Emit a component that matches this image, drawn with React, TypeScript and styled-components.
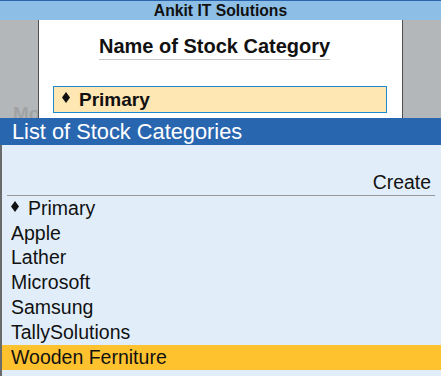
import React from "react";
import styled, { createGlobalStyle } from "styled-components";

const Global = createGlobalStyle`
  html, body { margin: 0; padding: 0; background: #e1eefa; }
  body { font-family: "Liberation Sans", Arial, sans-serif; }
  #root { width: 441px; height: 376px; overflow: hidden; }
`;

const Screen = styled.div`
  width: 441px;
  height: 376px;
  display: flex;
  flex-direction: column;
  overflow: hidden;
`;

const TopBar = styled.div`
  height: 19px;
  border-top: 1px solid #2b64ae;
  background: #8cbee6;
  display: flex;
  align-items: center;
  justify-content: center;
  font-weight: bold;
  font-size: 15.7px;
  color: #111;
`;

const GrayArea = styled.div`
  height: 98px;
  background: #b4b7ba;
  display: flex;
`;

const SideCol = styled.div`
  width: 38px;
  overflow: hidden;
  display: flex;
  align-items: flex-end;
  padding-left: 13px;
  box-sizing: border-box;
`;

const FadedText = styled.span`
  font-size: 19px;
  font-weight: bold;
  color: #a0a2a4;
  margin-bottom: -7px;
`;

const Panel = styled.div`
  width: 363px;
  background: #fff;
  border-left: 1px solid #505050;
  border-right: 1px solid #505050;
  display: flex;
  flex-direction: column;
  align-items: flex-start;
`;

const PanelTitle = styled.div`
  margin: 15px 0 0 60px;
  font-size: 20px;
  font-weight: bold;
  color: #111;
  padding-bottom: 2px;
  border-bottom: 1px solid #c8c8c8;
  line-height: 22px;
`;

const Field = styled.div`
  margin: 26px 0 0 14px;
  width: 334px;
  height: 27px;
  box-sizing: border-box;
  border: 1px solid #1c8ad1;
  background: #ffe7b3;
  display: flex;
  align-items: center;
  padding-left: 8px;
  font-size: 19px;
  font-weight: bold;
  color: #111;
`;

const DiamondIcon = styled.svg`
  width: 8px;
  height: 11px;
  margin-right: 9px;
  flex-shrink: 0;
  position: relative;
  top: -2px;
`;

const Diamond = () => (
  <DiamondIcon viewBox="0 0 8 11">
    <polygon points="4,0 8,5.5 4,11 0,5.5" fill="#111" />
  </DiamondIcon>
);

const ListPanel = styled.div`
  flex: 1;
  display: flex;
  flex-direction: column;
  background: #e1eefa;
  border-left: 2px solid #6a6a6a;
`;

const ListHeader = styled.div`
  height: 27px;
  margin-left: -2px;
  background: #2966b0;
  color: #fff;
  font-size: 21.8px;
  display: flex;
  align-items: center;
  padding-left: 12px;
`;

const CreateRow = styled.div`
  margin: 24px 6px 0 5px;
  height: 26px;
  border-bottom: 1px solid #9a9a9a;
  display: flex;
  align-items: center;
  justify-content: flex-end;
  padding-right: 4px;
  font-size: 19.4px;
  color: #111;
`;

const Rows = styled.div`
  display: flex;
  flex-direction: column;
`;

const Row = styled.div<{ $active?: boolean }>`
  height: 24.8px;
  display: flex;
  align-items: center;
  padding-left: 9px;
  font-size: 19.5px;
  color: #111;
  background: ${(p) => (p.$active ? "#fec22f" : "transparent")};
`;

const items = ["Apple", "Lather", "Microsoft", "Samsung", "TallySolutions"];

export default function App() {
  return (
    <>
      <Global />
      <Screen>
        <TopBar>Ankit IT Solutions</TopBar>
        <GrayArea>
          <SideCol>
            <FadedText>Mo</FadedText>
          </SideCol>
          <Panel>
            <PanelTitle>Name of Stock Category</PanelTitle>
            <Field>
              <Diamond />
              Primary
            </Field>
          </Panel>
        </GrayArea>
        <ListPanel>
          <ListHeader>List of Stock Categories</ListHeader>
          <CreateRow>Create</CreateRow>
          <Rows>
            <Row>
              <Diamond />
              Primary
            </Row>
            {items.map((it) => (
              <Row key={it}>{it}</Row>
            ))}
            <Row $active>Wooden Ferniture</Row>
          </Rows>
        </ListPanel>
      </Screen>
    </>
  );
}
